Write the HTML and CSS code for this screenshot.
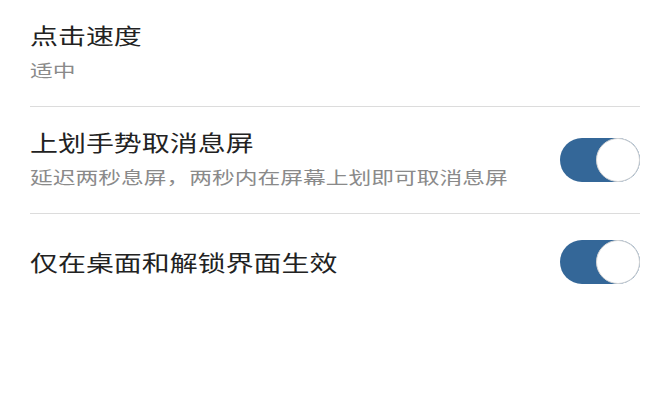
FILE: index.html
```html
<!DOCTYPE html>
<html lang="zh-CN">
  <head>
    <meta charset="utf-8">
    <title>息屏设置</title>
    <link rel="stylesheet" href="styles.css">
  </head>
  <body>
    <div class="settings-list">
      <div class="setting-row">
        <div class="setting-text">
          <div class="setting-title">点击速度</div>
          <div class="setting-summary">适中</div>
        </div>
      </div>
      <div class="setting-row">
        <div class="setting-text">
          <div class="setting-title">上划手势取消息屏</div>
          <div class="setting-summary">延迟两秒息屏，两秒内在屏幕上划即可取消息屏</div>
        </div>
        <div class="switch on"><div class="knob"></div></div>
      </div>
      <div class="setting-row single">
        <div class="setting-text">
          <div class="setting-title">仅在桌面和解锁界面生效</div>
        </div>
        <div class="switch on"><div class="knob"></div></div>
      </div>
    </div>
  </body>
</html>
```

FILE: styles.css
```css
body {
  margin: 0;
  background: #fff;
  font-family: "Noto Sans CJK SC", "Noto Sans", sans-serif;
}
.settings-list {
  padding: 0 30px;
}
.setting-row {
  display: flex;
  align-items: center;
  justify-content: space-between;
  padding: 18px 0 19px;
  border-bottom: 1px solid #dcdcdc;
}
.setting-row.single {
  border-bottom: none;
  min-height: 61px;
  padding: 17px 0 19px;
}
/* glyphs in the source are drawn wide, stretch them horizontally */
.setting-title,
.setting-summary {
  transform: scaleX(1.3);
  transform-origin: left center;
  white-space: nowrap;
}
.setting-title {
  font-size: 21.5px;
  line-height: 34px;
  color: #222;
}
.setting-summary {
  font-size: 17.5px;
  line-height: 35px;
  color: #8a8a8a;
}
.switch {
  position: relative;
  width: 80px;
  height: 44px;
  border-radius: 22px;
  background: #ccc;
  flex-shrink: 0;
}
.switch.on {
  background: #346798;
}
.knob {
  position: absolute;
  top: 0;
  right: 0;
  width: 42px;
  height: 42px;
  border-radius: 50%;
  background: #fff;
  border: 1px solid #d6d6d6;
}
```
